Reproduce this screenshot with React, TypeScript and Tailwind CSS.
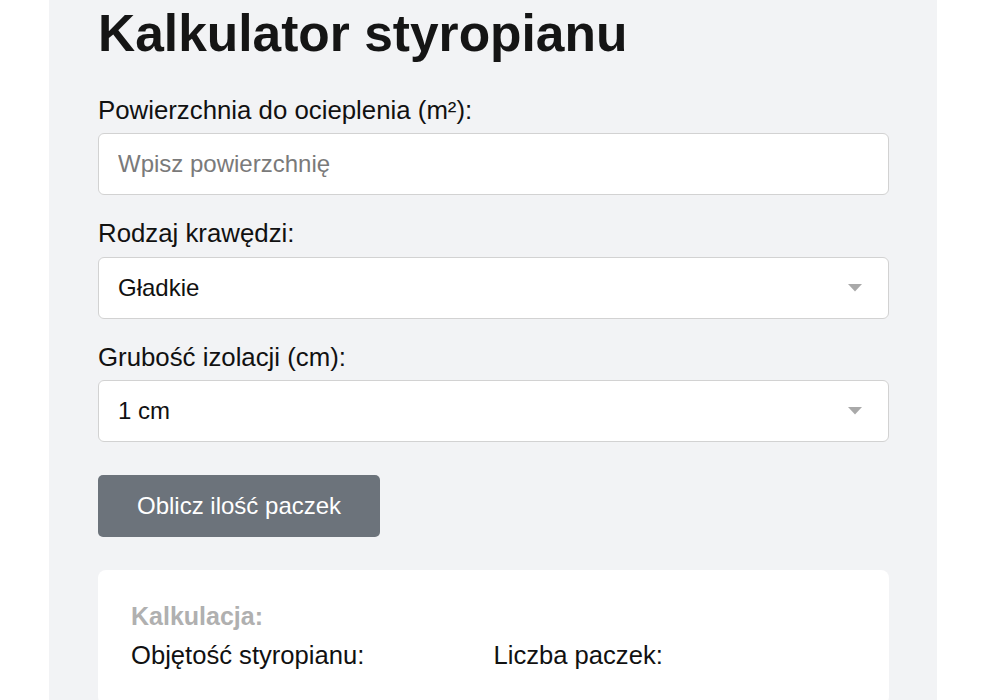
import React from 'react';

const Caret = () => (
  <svg className="pointer-events-none absolute right-[27px] top-1/2 -translate-y-1/2" width="14" height="8" viewBox="0 0 14 8">
    <path d="M0 0 L14 0 L7 7.5 Z" fill="#a9a9a9" />
  </svg>
);

const App: React.FC = () => {
  return (
    <div className="min-h-[700px] bg-white font-['Liberation_Sans',Arial,sans-serif] text-[#111]">
      <div className="ml-[49px] min-h-[700px] w-[888px] bg-[#f2f3f5] pl-[49px] pr-[48px] pt-[2px]">
        <h1 className="text-[51.5px] font-bold leading-[62px] text-[#151515]">Kalkulator styropianu</h1>

        {/* Powierzchnia */}
        <label className="mt-[27px] block text-[25.8px] leading-[38.4px]">Powierzchnia do ocieplenia (m²):</label>
        <input
          type="text"
          placeholder="Wpisz powierzchnię"
          className="mt-[4px] block h-[62px] w-full rounded-[6px] border border-[#d2d2d2] bg-white px-[19px] text-[24px] text-[#111] outline-none placeholder:text-[#7a7a7a]"
        />

        {/* Rodzaj krawędzi */}
        <label className="mt-[19px] block text-[25.8px] leading-[38.4px]">Rodzaj krawędzi:</label>
        <div className="relative mt-[4px]">
          <select className="block h-[62px] w-full appearance-none rounded-[6px] border border-[#d2d2d2] bg-white px-[19px] text-[24px] text-[#111] outline-none">
            <option>Gładkie</option>
            <option>Frezowane</option>
          </select>
          <Caret />
        </div>

        {/* Grubość */}
        <label className="mt-[19px] block text-[25.8px] leading-[38.4px]">Grubość izolacji (cm):</label>
        <div className="relative mt-[4px]">
          <select className="block h-[62px] w-full appearance-none rounded-[6px] border border-[#d2d2d2] bg-white px-[19px] text-[24px] text-[#111] outline-none">
            <option>1 cm</option>
            <option>2 cm</option>
            <option>3 cm</option>
          </select>
          <Caret />
        </div>

        <button className="mt-[33px] block h-[62px] rounded-[5px] bg-[#6c737b] px-[39px] text-[24px] text-white">
          Oblicz ilość paczek
        </button>

        {/* Wynik */}
        <div className="mt-[33px] rounded-[8px] bg-white px-[33px] pb-[30px] pt-[28px]">
          <h3 className="text-[25px] font-bold leading-[36px] text-[#b0b0b0]">Kalkulacja:</h3>
          <div className="mt-[2px] grid grid-cols-2 text-[25.6px] leading-[38.4px] text-[#111]">
            <p>Objętość styropianu:</p>
            <p>Liczba paczek:</p>
          </div>
        </div>
      </div>
    </div>
  );
};

export default App;
